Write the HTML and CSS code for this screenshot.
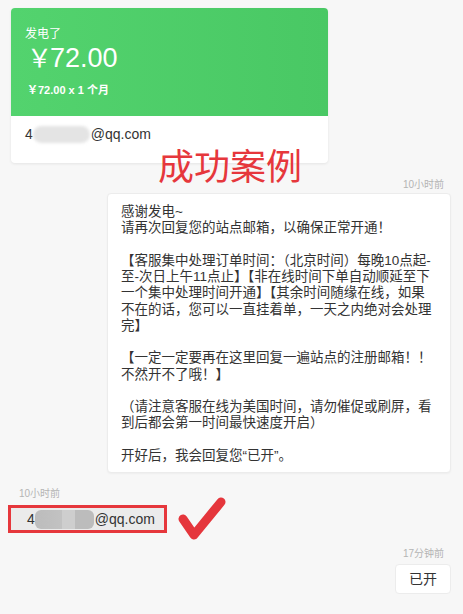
FILE: index.html
```html
<!DOCTYPE html>
<html lang="zh-CN">
<head>
  <meta charset="UTF-8" />
  <meta name="viewport" content="width=device-width,initial-scale=1.0" />
  <title>发电记录</title>
  <link rel="stylesheet" href="styles.css">
</head>
<body>
<div class="page">

  <div class="order-card">
    <div class="order-head">
      <p class="order-title">发电了</p>
      <p class="order-amount"><span class="yen">￥</span>72.00</p>
      <p class="order-detail">￥72.00 x 1 个月</p>
    </div>
    <div class="order-foot">
      <span>4</span><span class="mask mask-light"></span><span>@qq.com</span>
    </div>
  </div>

  <div class="chat">
    <div class="msg msg-right">
      <span class="msg-time">10小时前</span>
      <div class="bubble bubble-long">
        <p>感谢发电~<br>请再次回复您的站点邮箱，以确保正常开通！</p>
        <p>【客服集中处理订单时间：（北京时间）每晚10点起-<br>至-次日上午11点止】【非在线时间下单自动顺延至下<br>一个集中处理时间开通】【其余时间随缘在线，如果<br>不在的话，您可以一直挂着单，一天之内绝对会处理<br>完】</p>
        <p>【一定一定要再在这里回复一遍站点的注册邮箱！！<br>不然开不了哦！】</p>
        <p>（请注意客服在线为美国时间，请勿催促或刷屏，看<br>到后都会第一时间最快速度开启）</p>
        <p>开好后，我会回复您“已开”。</p>
      </div>
    </div>

    <div class="msg msg-left">
      <span class="msg-time">10小时前</span>
      <div class="bubble bubble-grey marked">
        <span>4</span><span class="mask mask-dark"></span><span>@qq.com</span>
      </div>
    </div>

    <div class="msg msg-right">
      <span class="msg-time">17分钟前</span>
      <div class="bubble bubble-short">已开</div>
    </div>
  </div>

  <!-- annotations drawn over the screenshot -->
  <div class="note-title">成功案例</div>
  <svg class="note-check" width="54" height="50" viewBox="0 0 54 50">
    <path d="M8 23 L19 39 L46 6" fill="none" stroke="#e5363c" stroke-width="9" stroke-linecap="round" stroke-linejoin="round"/>
  </svg>
</div>
</body>
</html>
```

FILE: styles.css
```css
:root { --green:#50cf6b; --text:#333; --muted:#b4b4b4; --red:#e6373c; }
*{box-sizing:border-box;margin:0;padding:0}
html,body{height:100%}
body{background:#f7f7f7;font-family:"Liberation Sans","Noto Sans CJK SC",sans-serif;color:var(--text);overflow:hidden}

.page{position:relative;padding:8px 12px 0 11px}

.order-card{
  width:317px;
  background:#fff;
  border-radius:4px;
  overflow:hidden;
  box-shadow:0 1px 3px rgba(0,0,0,.08);
}
.order-head{
  background:linear-gradient(90deg,#53d36e,#49c864);
  color:#fff;
  padding:18px 14px 19px;
}
.order-title{font-size:12px;line-height:16px}
.order-amount{font-size:27px;line-height:32px;padding-left:2px}
.order-amount .yen{font-size:25px;margin-right:-2px}
.order-detail{font-size:11px;line-height:14px;margin-top:9px;padding-left:2px;font-weight:bold}
.order-foot{padding:8px 14px 19px;font-size:14px;line-height:20px;display:flex;align-items:center;color:#333}

.mask{display:inline-block;height:17px;border-radius:9px}
.mask-light{width:57px;margin:0 1px 0 0;background:#e4e4e4;filter:blur(1.5px)}
.mask-dark{width:59px;margin:0 1px 0 0;height:19px;border-radius:6px;
  background:linear-gradient(90deg,#bcbcbc 0,#c2c2c2 45%,#cecece 45%,#cecece 68%,#bcbcbc 68%);filter:blur(.6px)}

.chat{display:flex;flex-direction:column;padding-top:16px}
.msg{display:flex;flex-direction:column}
.msg-right{align-items:flex-end}
.msg-left{align-items:flex-start}
.msg-time{font-size:10px;line-height:12px;color:var(--muted)}
.msg-right .msg-time{padding-right:7px}
.msg-left .msg-time{padding-left:8px}

.bubble{background:#fff;border:1px solid #ececec;border-radius:4px;color:#333}
.bubble-long{
  width:344px;
  margin-top:2px;
  padding:10px 13px 8px;
  font-size:13.5px;
  line-height:16.25px;
  white-space:nowrap;
  box-shadow:0 1px 2px rgba(0,0,0,.04);
}
.bubble-long p{margin-bottom:16.25px}
.bubble-long p:last-child{margin-bottom:0}

.msg-left{margin-top:15px}
.bubble-grey{
  background:#ebebeb;
  border:none;
  border-radius:0;
  margin-top:8px;
  width:153px;
  padding:0 0 0 16px;
  font-size:14px;
  line-height:22px;
  display:flex;
  align-items:center;
}
.marked{outline:3px solid var(--red)}

.msg-left + .msg-right{margin-top:18px}
.bubble-short{margin-top:4px;padding:4px 13px;font-size:14px;line-height:20px}

.note-title{
  position:absolute;
  left:158px;top:146px;
  font-size:36px;line-height:36px;
  color:var(--red);
  font-family:"Noto Sans CJK SC",sans-serif;
}
.note-check{position:absolute;left:175px;top:496px}
```
